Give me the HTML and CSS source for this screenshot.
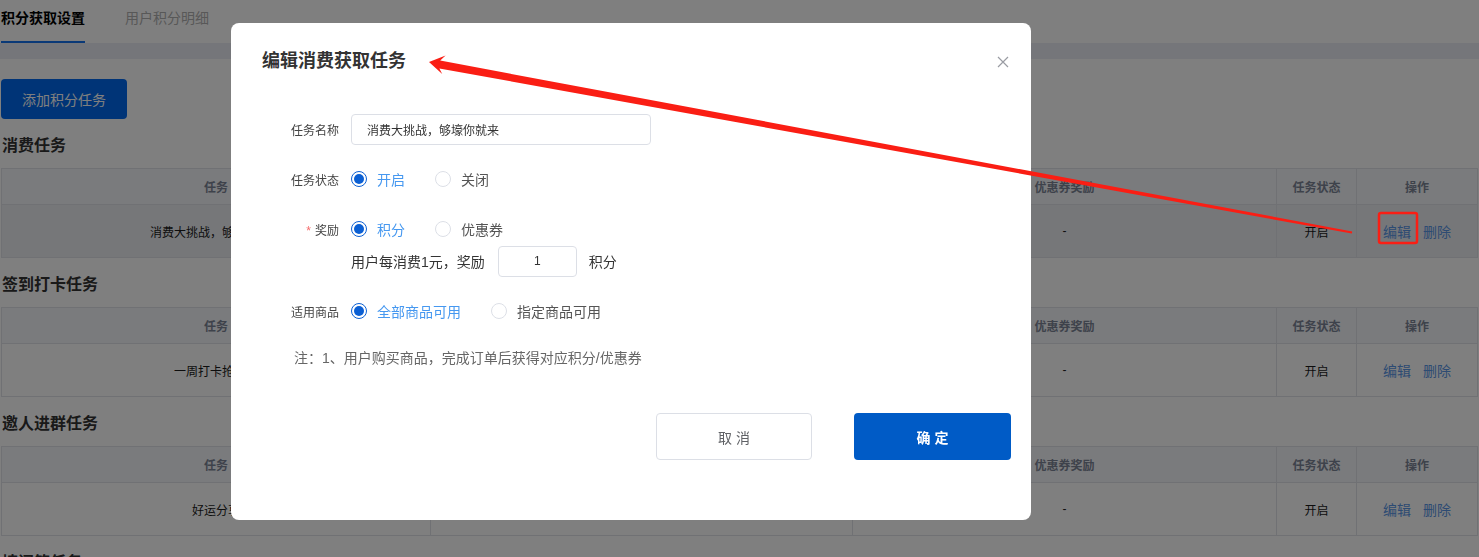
FILE: index.html
```html
<!DOCTYPE html>
<html lang="zh-CN">
<head>
  <meta charset="UTF-8" />
  <meta name="viewport" content="width=device-width, initial-scale=1.0"/>
  <title>积分获取设置</title>
  <link rel="stylesheet" href="styles.css">
</head>
<body>
  <div class="page">
    <div class="tabs">
      <a class="tab active">积分获取设置</a>
      <a class="tab">用户积分明细</a>
    </div>
    <div class="band"></div>

    <div class="toolbar">
      <button class="btn-add">添加积分任务</button>
    </div>

    <h2 class="sec-title">消费任务</h2>
    <table>
      <colgroup>
        <col class="c-task"><col class="c-point"><col class="c-coupon"><col class="c-status"><col class="c-op">
      </colgroup>
      <thead>
        <tr><th>任务</th><th>积分奖励</th><th>优惠券奖励</th><th>任务状态</th><th>操作</th></tr>
      </thead>
      <tbody>
        <tr class="hover">
          <td>消费大挑战，够壕你就来</td><td></td><td>-</td><td>开启</td>
          <td><a class="link">编辑</a><a class="link">删除</a></td>
        </tr>
      </tbody>
    </table>

    <h2 class="sec-title">签到打卡任务</h2>
    <table>
      <colgroup>
        <col class="c-task"><col class="c-point"><col class="c-coupon"><col class="c-status"><col class="c-op">
      </colgroup>
      <thead>
        <tr><th>任务</th><th>积分奖励</th><th>优惠券奖励</th><th>任务状态</th><th>操作</th></tr>
      </thead>
      <tbody>
        <tr>
          <td>一周打卡抢红包</td><td></td><td>-</td><td>开启</td>
          <td><a class="link">编辑</a><a class="link">删除</a></td>
        </tr>
      </tbody>
    </table>

    <h2 class="sec-title">邀人进群任务</h2>
    <table>
      <colgroup>
        <col class="c-task"><col class="c-point"><col class="c-coupon"><col class="c-status"><col class="c-op">
      </colgroup>
      <thead>
        <tr><th>任务</th><th>积分奖励</th><th>优惠券奖励</th><th>任务状态</th><th>操作</th></tr>
      </thead>
      <tbody>
        <tr>
          <td>好运分享</td><td></td><td>-</td><td>开启</td>
          <td><a class="link">编辑</a><a class="link">删除</a></td>
        </tr>
      </tbody>
    </table>

    <h2 class="sec-title">填问答任务</h2>
  </div>

  <div class="mask"></div>

  <div class="dialog">
    <div class="dialog-head">
      <span class="dialog-title">编辑消费获取任务</span>
      <svg class="dialog-close" width="12" height="12" viewBox="0 0 12 12">
        <path d="M1 1L11 11M11 1L1 11" stroke="#9a9ca3" stroke-width="1.2" fill="none"/>
      </svg>
    </div>

    <div class="form">
      <div class="form-row">
        <label class="form-label">任务名称</label>
        <input class="input name-input" type="text" value="消费大挑战，够壕你就来">
      </div>

      <div class="form-row">
        <label class="form-label">任务状态</label>
        <span class="radio checked"><i></i>开启</span>
        <span class="radio"><i></i>关闭</span>
      </div>

      <div class="form-row">
        <label class="form-label"><em>*</em>奖励</label>
        <span class="radio checked"><i></i>积分</span>
        <span class="radio"><i></i>优惠券</span>
      </div>
      <div class="form-row sub-row">
        <span class="form-label"></span>
        <span class="sub-text">用户每消费1元，奖励</span>
        <input class="input num-input" type="text" value="1">
        <span class="sub-text">积分</span>
      </div>

      <div class="form-row">
        <label class="form-label">适用商品</label>
        <span class="radio checked"><i></i>全部商品可用</span>
        <span class="radio"><i></i>指定商品可用</span>
      </div>

      <p class="note">注：1、用户购买商品，完成订单后获得对应积分/优惠券</p>
    </div>

    <div class="dialog-foot">
      <button class="btn btn-cancel">取 消</button>
      <button class="btn btn-ok">确 定</button>
    </div>
  </div>

  <!-- annotation drawn over the screenshot -->
  <svg class="annot" width="1479" height="557" viewBox="0 0 1479 557">
    <polygon fill="#fa1e14" points="429,62 445.6,55.4 440.2,60.6 1352.2,231.4 1351.8,233.6 439.4,68.4 442.2,74"/>
    <rect x="1379" y="213" width="38" height="30" rx="2" fill="none" stroke="#fa1e14" stroke-width="2.5"/>
  </svg>
</body>
</html>
```

FILE: styles.css
```css
* {
  box-sizing: border-box;
}
body {
  margin: 0;
  overflow: hidden;
  background: #fff;
  color: #000;
  font-family: "Liberation Sans", "Noto Sans CJK SC", sans-serif;
}
.page {
  padding: 0 2px 0 1px;
}

/* tabs */
.tabs {
  display: flex;
  gap: 40px;
  height: 43px;
}
.tab {
  height: 43px;
  padding-top: 8px;
  font-size: 14px;
  line-height: 20px;
  color: #b0b0b0;
}
.tab.active {
  color: #000;
  font-weight: bold;
  border-bottom: 2px solid #1473ee;
}
.band {
  height: 16px;
  margin: 0 -2px 0 -1px;
  background: #ebedf4;
}
.toolbar {
  padding-top: 20px;
}
.btn-add {
  height: 40px;
  padding: 0 21px;
  border: none;
  border-radius: 4px;
  background: #0068ee;
  color: #fff;
  font-family: inherit;
  font-size: 14px;
}

/* sections */
.sec-title {
  margin: 15px 0 10px 1px;
  font-size: 16px;
  line-height: 24px;
  font-weight: bold;
  color: #333;
}
table {
  width: 1476px;
  table-layout: fixed;
  border-collapse: collapse;
  font-size: 12px;
}
.c-task { width: 429px; }
.c-point { width: 422px; }
.c-coupon { width: 424px; }
.c-status { width: 80px; }
.c-op { width: 121px; }
th, td {
  border: 1px solid #e0e2e8;
  text-align: center;
  padding: 0;
}
th {
  height: 36px;
  background: #f5f6fa;
  color: #7c8596;
  font-weight: bold;
}
td {
  height: 53px;
  color: #1a1a1a;
}
tr.hover td {
  background: #eceef3;
}
.link {
  font-size: 14px;
  color: #5a96e6;
  margin: 0 6px;
}

/* overlay */
.mask {
  position: fixed;
  inset: 0;
  background: rgba(0, 0, 0, 0.5);
}
.dialog {
  position: absolute;
  left: 231px;
  top: 23px;
  width: 800px;
  height: 497px;
  background: #fff;
  border-radius: 8px;
}
.dialog-head {
  display: flex;
  justify-content: space-between;
  align-items: center;
  padding: 26px 22px 0 31px;
}
.dialog-title {
  font-size: 18px;
  line-height: 24px;
  font-weight: bold;
  color: #333;
}
.dialog-close {
  margin-top: 2px;
}

.form {
  padding-top: 40px;
  font-size: 14px;
}
.form-row {
  display: flex;
  align-items: center;
  height: 32px;
  margin-bottom: 18px;
}
.form-row.sub-row {
  margin-top: -18px;
}
.form-label {
  width: 108px;
  margin-right: 12px;
  text-align: right;
  font-size: 12px;
  color: #444;
}
.form-label em {
  font-style: normal;
  color: #f56c6c;
  margin-right: 4px;
}
.input {
  height: 31px;
  border: 1px solid #dcdfe6;
  border-radius: 4px;
  font-family: inherit;
  color: #333;
  outline: none;
}
.name-input {
  width: 300px;
  padding: 0 15px;
  font-size: 12px;
}
.num-input {
  width: 79px;
  margin: 0 12px 0 13px;
  text-align: center;
  font-size: 12px;
}
.sub-text {
  color: #333;
}
.radio {
  display: inline-flex;
  align-items: center;
  gap: 10px;
  margin-right: 30px;
  color: #555;
}
.radio i {
  width: 16px;
  height: 16px;
  border: 1px solid #dcdfe6;
  border-radius: 50%;
  position: relative;
}
.radio.checked {
  color: #4698f0;
}
.radio.checked i {
  border: 1.5px solid #0b5fd3;
}
.radio.checked i::after {
  content: "";
  position: absolute;
  left: 1.5px;
  top: 1.5px;
  width: 10px;
  height: 10px;
  border-radius: 50%;
  background: #0b5fd3;
}
.note {
  margin: 21px 0 0 63px;
  line-height: 20px;
  font-size: 14px;
  color: #666;
}

.dialog-foot {
  display: flex;
  justify-content: flex-end;
  gap: 42px;
  padding: 45px 20px 0 0;
}
.btn {
  width: 157px;
  height: 47px;
  border-radius: 4px;
  font-family: inherit;
  font-size: 14px;
}
.btn-cancel {
  width: 156px;
  border: 1px solid #dcdfe6;
  background: #fff;
  color: #606266;
}
.btn-ok {
  border: none;
  background: #005bc6;
  color: #fff;
  font-weight: bold;
}

.annot {
  position: absolute;
  left: 0;
  top: 0;
  pointer-events: none;
}
```
